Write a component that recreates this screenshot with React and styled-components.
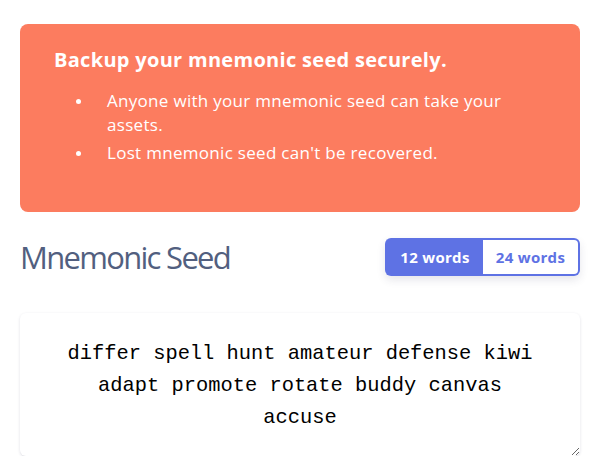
import React, { useState } from "react";
import styled, { createGlobalStyle } from "styled-components";

const GlobalStyle = createGlobalStyle`
  body {
    margin: 0;
    background: #ffffff;
    font-family: "Open Sans", "Noto Sans", sans-serif;
  }
`;

const Page = styled.div`
  display: flex;
  flex-direction: column;
  width: 560px;
  padding: 24px 16px 0 20px;
`;

const Alert = styled.div`
  background: #fc7c5f;
  border-radius: 8px;
  color: #ffffff;
  padding: 23px 50px 34px 34px;
  height: 188px;
  box-sizing: border-box;
`;

const AlertTitle = styled.div`
  font-size: 20px;
  font-weight: 700;
  letter-spacing: 0.3px;
  line-height: 26px;
  margin-bottom: 16px;
`;

const List = styled.ul`
  margin: 0;
  padding: 0 0 0 22px;
  list-style: none;
  font-size: 17px;
  letter-spacing: 0.3px;
  line-height: 24px;
`;

const Item = styled.li`
  display: flex;
  margin-bottom: 4px;
`;

const Dot = styled.span`
  flex: 0 0 31px;
  padding-top: 10px;
  &::before {
    content: "";
    display: block;
    width: 5px;
    height: 5px;
    border-radius: 50%;
    background: #ffffff;
  }
`;

const Header = styled.div`
  display: flex;
  justify-content: space-between;
  align-items: center;
  margin-top: 26px;
  height: 38px;
`;

const Title = styled.h2`
  margin: 0;
  font-size: 31px;
  font-weight: 400;
  letter-spacing: -1.7px;
  color: #525f7f;
`;

const Group = styled.div`
  display: flex;
  border-radius: 6px;
  box-shadow: 0 4px 8px rgba(50, 50, 93, 0.12);
`;

const Toggle = styled.button`
  font-family: "Open Sans", "Noto Sans", sans-serif;
  font-size: 15px;
  font-weight: 700;
  letter-spacing: 0.3px;
  height: 38px;
  padding: 0;
  cursor: pointer;
  border: 2px solid #5e72e4;
  background: ${(p) => (p.active ? "#5e72e4" : "#ffffff")};
  color: ${(p) => (p.active ? "#ffffff" : "#5e72e4")};
  border-radius: ${(p) => (p.first ? "6px 0 0 6px" : "0 6px 6px 0")};
  ${(p) => (p.first ? "border-right: none; width: 98px;" : "border-left: none; width: 97px;")}
`;

const Seed = styled.textarea`
  margin-top: 37px;
  height: 143px;
  box-sizing: border-box;
  width: 560px;
  border: none;
  border-radius: 6px;
  box-shadow: 0 1px 3px rgba(50, 50, 93, 0.15), 0 1px 0 rgba(0, 0, 0, 0.02);
  padding: 25px 40px 20px;
  font-family: "Liberation Mono", "Courier New", monospace;
  font-size: 20.4px;
  line-height: 32px;
  text-align: center;
  color: #000000;
  outline: none;
  resize: vertical;
`;

const seeds = {
  12: "differ spell hunt amateur defense kiwi adapt promote rotate buddy canvas accuse",
  24: "differ spell hunt amateur defense kiwi adapt promote rotate buddy canvas accuse",
};

const tips = [
  "Anyone with your mnemonic seed can take your assets.",
  "Lost mnemonic seed can't be recovered.",
];

const App = () => {
  const [count, setCount] = useState(12);
  return (
    <Page>
      <GlobalStyle />
      <Alert>
        <AlertTitle>Backup your mnemonic seed securely.</AlertTitle>
        <List>
          {tips.map((t) => (
            <Item key={t}>
              <Dot />
              <span>{t}</span>
            </Item>
          ))}
        </List>
      </Alert>
      <Header>
        <Title>Mnemonic Seed</Title>
        <Group>
          <Toggle first active={count === 12} onClick={() => setCount(12)}>
            12 words
          </Toggle>
          <Toggle active={count === 24} onClick={() => setCount(24)}>
            24 words
          </Toggle>
        </Group>
      </Header>
      <Seed readOnly value={seeds[count]} />
    </Page>
  );
};

export default App;
